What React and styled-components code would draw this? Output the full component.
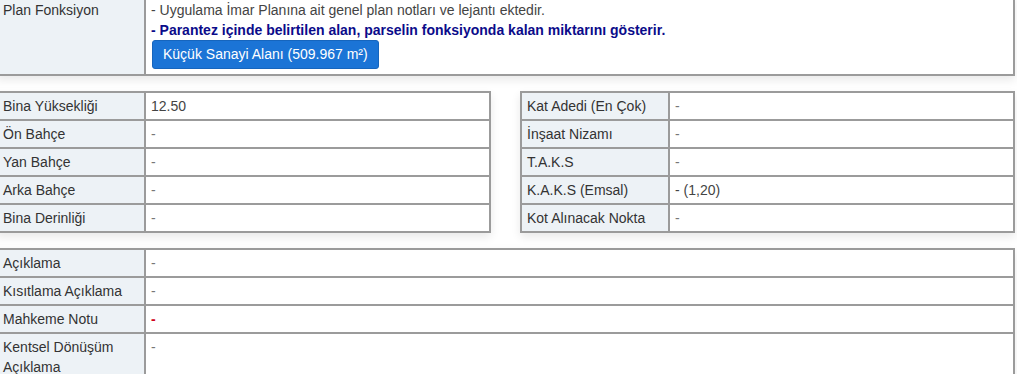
import React from 'react';
import styled, { createGlobalStyle } from 'styled-components';

const GlobalStyle = createGlobalStyle`
  html, body {
    margin: 0;
    padding: 0;
    background: #fff;
    overflow: hidden;
  }
  body {
    font-family: 'Liberation Sans', Arial, sans-serif;
    font-size: 14px;
    color: #333;
  }
`;

const buildingLeft = [
  ['Bina Yüksekliği', '12.50'],
  ['Ön Bahçe', '-'],
  ['Yan Bahçe', '-'],
  ['Arka Bahçe', '-'],
  ['Bina Derinliği', '-'],
];

const buildingRight = [
  ['Kat Adedi (En Çok)', '-'],
  ['İnşaat Nizamı', '-'],
  ['T.A.K.S', '-'],
  ['K.A.K.S (Emsal)', '- (1,20)'],
  ['Kot Alınacak Nokta', '-'],
];

const notes = [
  ['Açıklama', '-'],
  ['Kısıtlama Açıklama', '-'],
  ['Mahkeme Notu', '-', true],
  ['Kentsel Dönüşüm Açıklama', '-'],
];

const App = () => {
  return (
    <>
      <GlobalStyle />
      <Page>
        <InfoTable>
          <tbody>
            <tr>
              <Label>Plan Fonksiyon</Label>
              <Value>
                <Note>- Uygulama İmar Planına ait genel plan notları ve lejantı ektedir.</Note>
                <Warning>- Parantez içinde belirtilen alan, parselin fonksiyonda kalan miktarını gösterir.</Warning>
                <AreaButton type='button'>Küçük Sanayi Alanı (509.967 m²)</AreaButton>
              </Value>
            </tr>
          </tbody>
        </InfoTable>

        <Columns>
          <InfoTable>
            <tbody>
              {buildingLeft.map(([label, value]) => (
                <tr key={label}>
                  <Label>{label}</Label>
                  <Value $muted={value === '-'}>{value}</Value>
                </tr>
              ))}
            </tbody>
          </InfoTable>
          <InfoTable>
            <tbody>
              {buildingRight.map(([label, value]) => (
                <tr key={label}>
                  <Label>{label}</Label>
                  <Value $muted={value === '-'}>{value}</Value>
                </tr>
              ))}
            </tbody>
          </InfoTable>
        </Columns>

        <InfoTable>
          <tbody>
            {notes.map(([label, value, alert]) => (
              <tr key={label}>
                <Label>{label}</Label>
                <Value $muted $alert={alert}>{value}</Value>
              </tr>
            ))}
          </tbody>
        </InfoTable>
      </Page>
    </>
  );
};

const Page = styled.div`
  width: 1019px;
  margin-left: -4px;
  margin-top: -5px;
  display: flex;
  flex-direction: column;
  gap: 15px;
`;

const Columns = styled.div`
  display: grid;
  grid-template-columns: 495px 495px;
  column-gap: 29px;
`;

const InfoTable = styled.table`
  width: 100%;
  border-collapse: collapse;
  border: 2px solid #9b9b9b;
  box-shadow: 0 4px 9px rgba(0, 0, 0, 0.09);
  background: #fff;
`;

const Label = styled.td`
  width: 136px;
  padding: 3px 5px;
  border: 2px solid #9b9b9b;
  background: #edf2f6;
  color: #333;
  line-height: 20px;
  vertical-align: top;
`;

const Value = styled.td`
  padding: 3px 5px;
  border: 2px solid #9b9b9b;
  background: #fff;
  color: ${props => (props.$alert ? '#d0021b' : props.$muted ? '#777' : '#444')};
  font-weight: ${props => (props.$alert ? 700 : 400)};
  line-height: 20px;
  vertical-align: top;
`;

const Note = styled.div`
  color: #444;
`;

const Warning = styled.div`
  color: #0b0b8a;
  font-weight: 700;
`;

const AreaButton = styled.button`
  display: inline-block;
  margin: 0 0 2px 1px;
  padding: 4px 10px;
  font-family: 'Liberation Sans', Arial, sans-serif;
  font-size: 14px;
  line-height: 19px;
  color: #fff;
  background: #1b74d6;
  border: 1px solid #1665bd;
  border-radius: 3px;
  cursor: pointer;
`;

export default App;
